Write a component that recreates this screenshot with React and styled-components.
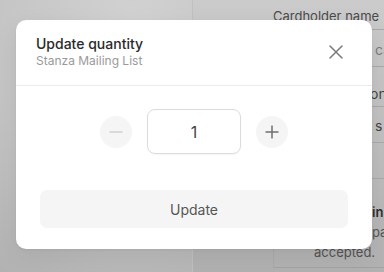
import React from "react";
import styled, { createGlobalStyle } from "styled-components";

const GlobalStyle = createGlobalStyle`
  html, body {
    margin: 0;
    padding: 0;
    background: #c4c4c4;
  }
  body {
    font-family: Inter, "Noto Sans", "Liberation Sans", sans-serif;
    -webkit-font-smoothing: antialiased;
  }
`;

export default function App() {
  return (
    <Screen>
      <GlobalStyle />
      <Page>
        <Sidebar />
        <Main>
          <Form>
            <Label>Cardholder name</Label>
            <FieldGroup>
              <Field $muted $height={36} $pad={4}>card</Field>
              <Field $height={39} $align="flex-end" $indent={97}>on</Field>
              <Field $height={35} $pad={3}>s</Field>
              <Field $height={35} />
            </FieldGroup>
            <InfoBox>
              <InfoLine $bold $indent={58}>in</InfoLine>
              <InfoLine $indent={58}>pa</InfoLine>
              <InfoLine>accepted.</InfoLine>
            </InfoBox>
          </Form>
        </Main>
      </Page>

      <Modal>
        <Header>
          <HeaderText>
            <Title>Update quantity</Title>
            <Subtitle>Stanza Mailing List</Subtitle>
          </HeaderText>
          <CloseButton aria-label="Close">
            <svg width="16" height="16" viewBox="0 0 16 16" fill="none">
              <path
                d="M2 2 L14 14 M14 2 L2 14"
                stroke="#7a7a7a"
                strokeWidth="1.5"
                strokeLinecap="round"
              />
            </svg>
          </CloseButton>
        </Header>
        <Body>
          <Stepper>
            <RoundButton $disabled aria-label="Decrease">
              <svg width="14" height="14" viewBox="0 0 14 14">
                <path d="M0.5 7 H13.5" stroke="currentColor" strokeWidth="1.5" />
              </svg>
            </RoundButton>
            <QuantityBox>1</QuantityBox>
            <RoundButton aria-label="Increase">
              <svg width="14" height="14" viewBox="0 0 14 14">
                <path
                  d="M0.5 7 H13.5 M7 0.5 V13.5"
                  stroke="currentColor"
                  strokeWidth="1.5"
                />
              </svg>
            </RoundButton>
          </Stepper>
          <SubmitButton>Update</SubmitButton>
        </Body>
      </Modal>
    </Screen>
  );
}

const Screen = styled.div`
  position: relative;
  width: 384px;
  height: 272px;
  overflow: hidden;
`;

const Page = styled.div`
  display: grid;
  grid-template-columns: 193px 1fr;
  height: 100%;
`;

const Sidebar = styled.div`
  background: radial-gradient(
    ellipse 140% 110% at 70% 10%,
    #d2d2d2 0%,
    #c4c4c4 55%,
    #b0b0b0 100%
  );
  border-right: 1px solid #c0c0c0;
`;

const Main = styled.div`
  background: linear-gradient(to bottom, #cbcbcb 0%, #c0c0c0 50%, #b1b1b1 100%);
  padding-left: 80px;
  overflow: hidden;
`;

const Form = styled.div`
  display: flex;
  flex-direction: column;
  width: 200px;
  padding-top: 8px;
  color: #474747;
  font-size: 13px;
`;

const Label = styled.div`
  line-height: 16px;
  color: #4a4a4a;
  margin-bottom: 5px;
`;

const FieldGroup = styled.div`
  display: flex;
  flex-direction: column;
  border-top: 1px solid #a9a9a9;
`;

const Field = styled.div`
  box-sizing: border-box;
  height: ${(p) => p.$height + 1}px;
  display: flex;
  align-items: ${(p) => p.$align || "center"};
  padding-left: ${(p) => p.$indent || 102}px;
  padding-top: ${(p) => p.$pad || 0}px;
  padding-bottom: ${(p) => (p.$align ? 2 : 0)}px;
  border-bottom: 1px solid #a9a9a9;
  font-size: 14px;
  line-height: 20px;
  color: ${(p) => (p.$muted ? "#7d7d7d" : "#454545")};
  white-space: nowrap;
`;

const InfoBox = styled.div`
  display: flex;
  flex-direction: column;
  padding: 23px 0 5px 40px;
  border-left: 1px solid #a9a9a9;
  border-bottom: 1px solid #a2a2a2;
`;

const InfoLine = styled.div`
  font-size: 13px;
  line-height: 20px;
  white-space: nowrap;
  padding-left: ${(p) => p.$indent || 0}px;
  font-weight: ${(p) => (p.$bold ? 600 : 400)};
  color: ${(p) => (p.$bold ? "#2e2e2e" : "#545454")};
`;

const Modal = styled.div`
  position: absolute;
  top: 20px;
  left: 16px;
  width: 356px;
  background: #ffffff;
  border-radius: 10px;
  box-shadow: 0 8px 24px rgba(0, 0, 0, 0.08), 0 1px 3px rgba(0, 0, 0, 0.05);
  display: flex;
  flex-direction: column;
`;

const Header = styled.div`
  display: flex;
  align-items: center;
  justify-content: space-between;
  padding: 15px 24px 16px 20px;
  border-bottom: 1px solid #ebebeb;
`;

const HeaderText = styled.div`
  display: flex;
  flex-direction: column;
`;

const Title = styled.div`
  font-size: 14px;
  line-height: 18px;
  font-weight: 500;
  color: #2a2a2a;
`;

const Subtitle = styled.div`
  font-size: 12px;
  line-height: 16px;
  color: #9a9a9a;
`;

const CloseButton = styled.button`
  width: 24px;
  height: 24px;
  padding: 0;
  border: none;
  background: none;
  display: flex;
  align-items: center;
  justify-content: center;
  cursor: pointer;
`;

const Body = styled.div`
  display: flex;
  flex-direction: column;
  gap: 36px;
  padding: 23px 24px 21px;
`;

const Stepper = styled.div`
  display: flex;
  align-items: center;
  justify-content: center;
  gap: 15px;
`;

const RoundButton = styled.button`
  width: 32px;
  height: 32px;
  border-radius: 50%;
  border: none;
  padding: 0;
  background: #f5f5f5;
  color: ${(p) => (p.$disabled ? "#cfcfcf" : "#6f6f6f")};
  display: flex;
  align-items: center;
  justify-content: center;
  cursor: ${(p) => (p.$disabled ? "default" : "pointer")};
`;

const QuantityBox = styled.div`
  box-sizing: border-box;
  width: 94px;
  height: 45px;
  border: 1px solid #dcdcdc;
  border-radius: 8px;
  display: flex;
  align-items: center;
  justify-content: center;
  font-size: 16px;
  color: #444444;
  box-shadow: 0 1px 2px rgba(0, 0, 0, 0.04);
`;

const SubmitButton = styled.button`
  height: 38px;
  border: none;
  border-radius: 7px;
  background: #f5f5f5;
  font-family: inherit;
  font-size: 14px;
  color: #555555;
  cursor: pointer;
`;
